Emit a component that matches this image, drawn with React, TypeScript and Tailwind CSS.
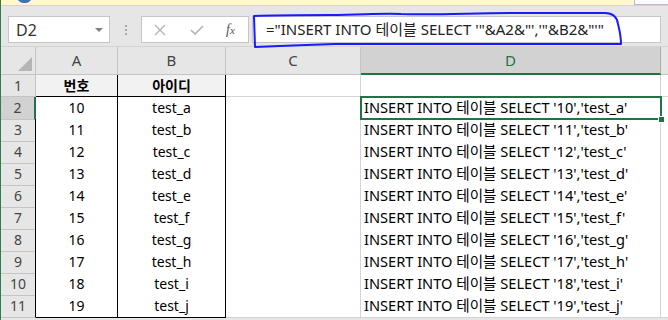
import React from 'react';

const rows = [
  ['10', 'test_a'],
  ['11', 'test_b'],
  ['12', 'test_c'],
  ['13', 'test_d'],
  ['14', 'test_e'],
  ['15', 'test_f'],
  ['16', 'test_g'],
  ['17', 'test_h'],
  ['18', 'test_i'],
  ['19', 'test_j'],
];

const font = "font-['Noto_Sans','Noto_Sans_CJK_KR',sans-serif]";

export default function App() {
  return (
    <div className={`relative w-[668px] h-[320px] overflow-hidden bg-[#e6e6e6] border-l border-[#2f7d4f] ${font}`}>
      {/* message bar edge */}
      <div className="h-[6px] bg-[#fff8d2] border-b border-[#e0d69e] flex">
        <div className="ml-[16px] -mt-[10px] w-[15px] h-[13px] rounded-full bg-[#3f72b0]" />
        <div className="ml-auto w-[34px] h-[5px] bg-[#fbfbfb] border-l border-b border-[#bdbdbd]" />
      </div>

      {/* formula bar */}
      <div className="h-[41px] flex items-start pl-[7px] pt-[10px] border-b border-[#d4d4d4]">
        <div className="w-[102px] h-[27px] bg-white border border-[#c6c6c6] flex items-center justify-between pl-[7px] pr-[6px]">
          <span className="text-[16px] text-[#333]">D2</span>
          <span className="w-0 h-0 border-l-[4px] border-r-[4px] border-t-[4px] border-l-transparent border-r-transparent border-t-[#808080]" />
        </div>
        <div className="w-[31px] h-[27px] flex flex-col items-center justify-center gap-[2px]">
          <span className="w-[2px] h-[2px] bg-[#a8a8a8]" />
          <span className="w-[2px] h-[2px] bg-[#a8a8a8]" />
          <span className="w-[2px] h-[2px] bg-[#a8a8a8]" />
        </div>
        <div className="w-[108px] h-[27px] bg-white border border-[#c6c6c6] flex items-center">
          <svg className="ml-[12px]" width="12" height="12" viewBox="0 0 12 12">
            <path d="M1 1 L11 11 M11 1 L1 11" stroke="#b4b4b4" strokeWidth="1.4" fill="none" />
          </svg>
          <svg className="ml-[24px]" width="14" height="12" viewBox="0 0 14 12">
            <path d="M1 6 L5 10 L13 2" stroke="#b4b4b4" strokeWidth="1.6" fill="none" />
          </svg>
          <span className="ml-[22px] text-[14px] italic text-[#555] font-['Liberation_Serif',serif] leading-none">
            f<span className="text-[11px]">x</span>
          </span>
        </div>
        <div className="ml-[3px] w-[409px] h-[27px] bg-white border border-[#c6c6c6] flex items-center pl-[13px]">
          <span className="text-[15px] text-[#222] whitespace-nowrap">
            ="INSERT INTO 테이블 SELECT '"&amp;A2&amp;"','"&amp;B2&amp;"'"
          </span>
        </div>
      </div>

      {/* column headers */}
      <div className="grid grid-cols-[35px_82px_108px_135px_300px_1fr] h-[28px] text-[15px] text-[#444]">
        <div className="border-r border-b border-[#c4c4c4] flex items-end justify-end pr-[3px] pb-[3px]">
          <svg width="14" height="14" viewBox="0 0 14 14">
            <polygon points="14,0 14,14 0,14" fill="#b5b5b5" />
          </svg>
        </div>
        <div className="border-r border-b border-[#c4c4c4] flex items-center justify-center">A</div>
        <div className="border-r border-b border-[#c4c4c4] flex items-center justify-center">B</div>
        <div className="border-r border-b border-[#c4c4c4] flex items-center justify-center">C</div>
        <div className="bg-[#d2d2d2] border-r border-[#ababab] border-b-2 border-b-[#217346] flex items-center justify-center text-[#217346]">D</div>
        <div className="border-b border-[#c4c4c4]" />
      </div>

      {/* row 1 */}
      <div className="grid grid-cols-[35px_82px_108px_135px_300px_1fr] h-[22px]">
        <div className="border-r border-b border-[#c4c4c4] flex items-center justify-center text-[14px] text-[#444]">1</div>
        <div className="bg-[#f2f2f2] border-r border-b border-black flex items-center justify-center text-[14px] font-bold text-black">번호</div>
        <div className="bg-[#f2f2f2] border-r border-b border-black flex items-center justify-center text-[14px] font-bold text-black">아이디</div>
        <div className="bg-white border-r border-b border-[#d4d4d4]" />
        <div className="bg-white border-r border-b border-[#d4d4d4]" />
        <div className="bg-white border-b border-[#d4d4d4]" />
      </div>

      {rows.map(([num, id], i) => {
        const selected = i === 0;
        return (
          <div key={num} className="grid grid-cols-[35px_82px_108px_135px_300px_1fr] h-[22px]">
            <div
              className={
                selected
                  ? 'bg-[#d2d2d2] border-r-2 border-r-[#217346] border-b border-b-[#c4c4c4] flex items-center justify-center text-[14px] text-[#444]'
                  : 'border-r border-r-black border-b border-b-[#c4c4c4] flex items-center justify-center text-[14px] text-[#444]'
              }
            >
              {i + 2}
            </div>
            <div className="bg-white border-r border-b border-black flex items-center justify-center text-[14px] text-black">{num}</div>
            <div className="bg-white border-r border-b border-black flex items-center justify-center text-[14px] text-black">{id}</div>
            <div className="bg-white border-r border-b border-[#d4d4d4]" />
            <div className="bg-white border-r border-b border-[#d4d4d4] flex items-center pl-[3px] text-[14.6px] text-black whitespace-nowrap">
              INSERT INTO 테이블 SELECT '{num}','{id}'
            </div>
            <div className="bg-white border-b border-[#d4d4d4]" />
          </div>
        );
      })}

      {/* active cell D2 */}
      <div className="absolute left-[359px] top-[96px] w-[302px] h-[24px] border-2 border-[#217346]" />
      <div className="absolute left-[657px] top-[116px] w-[7px] h-[7px] bg-[#217346] border border-white" />

      {/* hand-drawn annotation round the formula */}
      <svg className="absolute left-0 top-0 pointer-events-none" width="668" height="60" viewBox="0 0 668 60">
        <path
          d="M253,16 C275,15 300,15 330,15 C360,15 380,13 400,14 C440,15 470,13 520,13 L604,13 C612,13 616,17 617,24 C619,32 620,38 620,44 C560,44 420,44 334,44 C300,45 275,46 254,47 Z"
          stroke="#1a1aff"
          strokeWidth="2"
          fill="none"
          strokeLinejoin="round"
        />
      </svg>
    </div>
  );
}
